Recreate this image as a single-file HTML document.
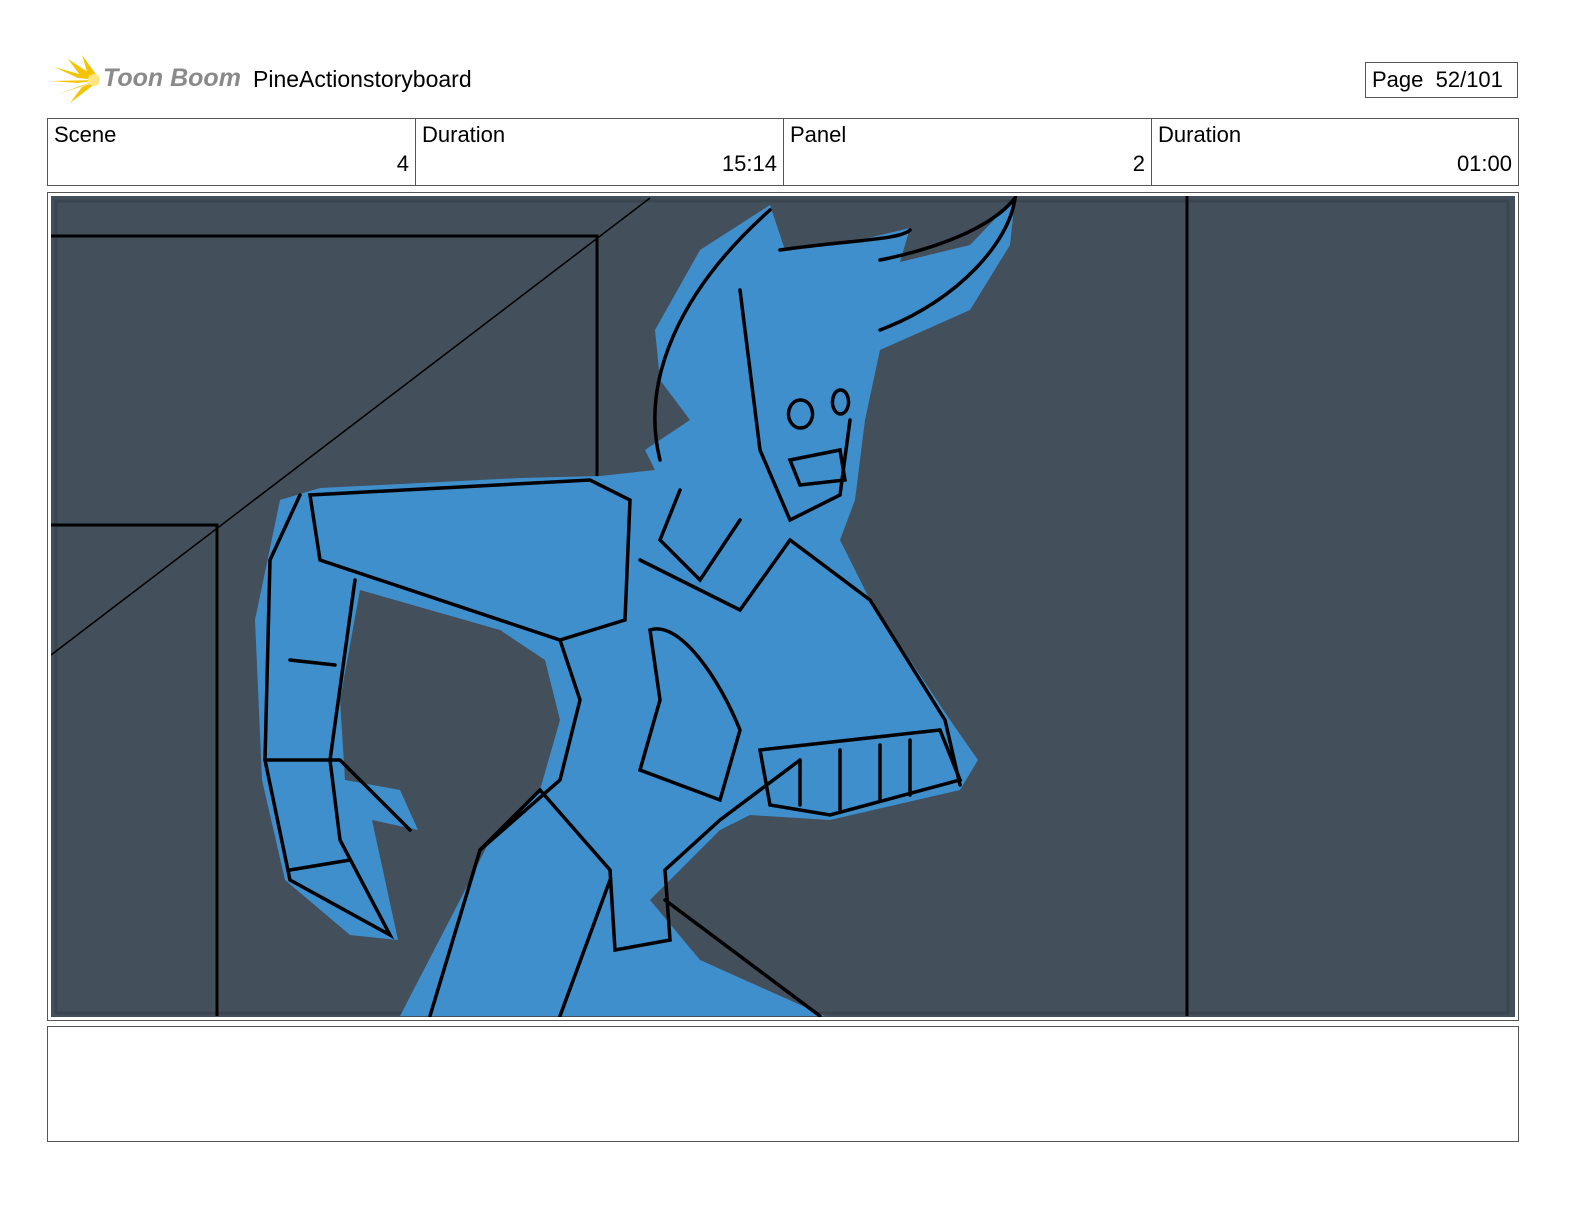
<!DOCTYPE html>
<html><head><meta charset="utf-8"><style>
body{margin:0;width:1584px;height:1224px;background:#fff;position:relative;font-family:"Liberation Sans",sans-serif;overflow:hidden}
.a{position:absolute}
.cell{position:absolute;top:118px;height:68px;border:1px solid #555;box-sizing:border-box;font-size:22px}
.cell .l{position:absolute;left:6px;top:3px}
.cell .r{position:absolute;right:6px;top:32px}
</style></head><body>
<svg class="a" style="left:50px;top:55px" width="52" height="50" viewBox="0 0 52 50">
<g fill="#f5c400">
<path d="M50 25 L18 4 L30 20 Z"/><path d="M50 25 L4 12 L28 23 Z"/><path d="M50 25 L0 26 L28 28 Z"/><path d="M50 25 L6 40 L30 31 Z"/><path d="M50 25 L20 48 L32 32 Z"/><path d="M50 25 L32 0 L38 20Z"/>
</g><circle cx="44" cy="25" r="6" fill="#ffe680"/></svg>
<div class="a" style="left:103px;top:64px;font-size:25px;font-weight:bold;font-style:italic;color:#8a8a8a">Toon Boom</div>
<div class="a" style="left:253px;top:66px;font-size:23px">PineActionstoryboard</div>
<div class="a" style="left:1365px;top:62px;width:153px;height:36px;border:1px solid #555;box-sizing:border-box;font-size:22px;padding:4px 0 0 6px">Page&nbsp; 52/101</div>
<div class="cell" style="left:47px;width:369px"><span class="l">Scene</span><span class="r">4</span></div>
<div class="cell" style="left:415px;width:369px"><span class="l">Duration</span><span class="r">15:14</span></div>
<div class="cell" style="left:783px;width:369px"><span class="l">Panel</span><span class="r">2</span></div>
<div class="cell" style="left:1151px;width:368px"><span class="l">Duration</span><span class="r">01:00</span></div>
<div class="a" style="left:47px;top:192px;width:1472px;height:829px;border:1px solid #555;box-sizing:border-box"></div>
<div class="a" style="left:47px;top:1026px;width:1472px;height:116px;border:1px solid #555;box-sizing:border-box"></div>
<svg class="a" style="left:51px;top:196px" width="1464" height="821" viewBox="51 196 1464 821">
<rect x="51" y="196" width="1464" height="821" fill="#434f5b"/>
<rect x="56" y="201" width="1452" height="812" fill="none" stroke="#3a4550" stroke-width="3"/>
<g stroke="#000" stroke-width="3" fill="none">
<path d="M51 236H597V480M51 525H217V1016M1187 196V1016"/>
<path d="M51 655L650 198" stroke-width="1.5"/>
</g>
<path fill="#3f8fcc" d="M655 330L700 250L770 205L785 250L860 240L910 228L900 262L970 245L1015 198L1010 245L970 310L880 350L865 420L855 500L840 540L870 600L950 720L978 760L960 790L830 820L750 815L720 830L650 900L700 960L825 1016L400 1016L460 900L490 840L540 790L560 720L545 660L500 630L360 590L340 700L345 780L400 790L418 830L372 820L398 940L350 935L285 880L262 780L255 620L280 500L320 488L520 478L600 476L655 470L645 450L690 420L660 380Z"/>
<g stroke="#000" stroke-width="3.5" fill="none" stroke-linecap="round">
<path d="M660 460C640 380 680 290 770 210M740 290L760 450L790 520L840 495L850 420"/>
<path d="M800 400a12 14 0 1 0 1 0M840 390a8 12 0 1 0 1 0M790 460L840 450L845 480L800 485Z"/>
<path d="M780 250C850 240 900 240 910 230M880 260C930 250 990 230 1015 198C1010 240 960 300 880 330"/>
<path d="M310 495L590 480L630 500L625 620L560 640L320 560Z"/>
<path d="M300 495L270 560L265 760L290 880L390 935L340 840L330 760L355 580"/>
<path d="M265 760L340 760L410 830M290 660L335 665M290 870L350 860"/>
<path d="M680 490L660 540L700 580L740 520M640 560L740 610L790 540L870 600L945 720L960 785"/>
<path d="M650 630C680 620 720 680 740 730L720 800L640 770L660 700Z"/>
<path d="M760 750L940 730L960 780L830 815L770 805Z"/>
<path d="M800 760V805M840 750V810M880 745V800M910 740V795"/>
<path d="M560 640L580 700L560 780L480 850L430 1016M540 790L610 870L615 950L670 940L665 870L720 820L800 760"/>
<path d="M610 880L560 1016M665 900L820 1016M480 850L540 790"/>
</g>
</svg>
</body></html>
